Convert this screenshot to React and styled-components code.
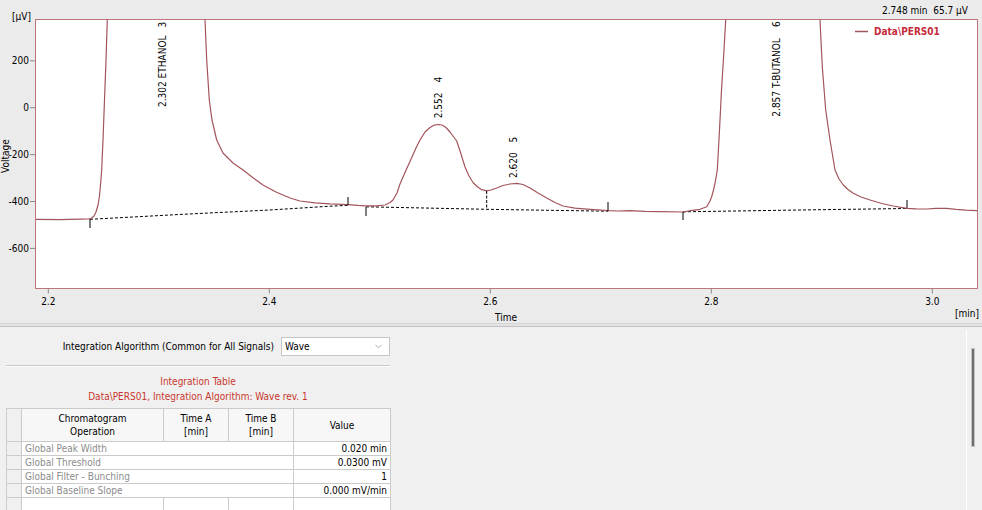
import React from "react";
import styled, { createGlobalStyle } from "styled-components";
import { ChevronDown } from "lucide-react";

const UI_FONT = `"DejaVu Sans Condensed", "DejaVu Sans", sans-serif`;

const GlobalStyle = createGlobalStyle`
  html, body {
    margin: 0;
    padding: 0;
    background: #f0f0f0;
  }
  body {
    font-family: ${UI_FONT};
    font-size: 10px;
    color: #000;
  }
`;

const Window = styled.div`
  width: 982px;
  height: 510px;
  display: flex;
  flex-direction: column;
  overflow: hidden;
`;

const ChartPane = styled.div`
  flex: none;
  height: 323px;
  background: #ebebeb;
`;

const Splitter = styled.div`
  flex: none;
  height: 2px;
  background: #e2e2e2;
  border-top: 1px solid #d6d6d6;
  border-bottom: 1px solid #c4c4c4;
`;

const Plot = styled.svg`
  display: block;
  font-family: ${UI_FONT};
  font-size: 10px;
`;

const LowerPane = styled.div`
  flex: 1;
  min-height: 0;
  display: flex;
  background: #f0f0f0;
`;

const Settings = styled.div`
  width: 384px;
  padding: 10px 0 0 6px;
  display: flex;
  flex-direction: column;
`;

const AlgoRow = styled.div`
  display: flex;
  justify-content: flex-end;
  align-items: center;
  gap: 7px;
  height: 19px;
`;

const Select = styled.div`
  width: 109px;
  height: 19px;
  box-sizing: border-box;
  display: flex;
  align-items: center;
  justify-content: space-between;
  padding: 0 5px 0 3px;
  background: #fff;
  border: 1px solid #c6c6c6;
  color: #000;
`;

const Divider = styled.div`
  margin-top: 9px;
  height: 0;
  border-top: 1px solid #c9c9c9;
  border-bottom: 1px solid #fff;
`;

const Caption = styled.div`
  margin-top: 7px;
  text-align: center;
  line-height: 15px;
  color: #c8372d;
`;

const Grid = styled.table`
  margin-top: 4px;
  width: 385px;
  border-collapse: collapse;
  table-layout: fixed;
  background: #fff;
  font-size: 10px;
`;

const HeadCell = styled.th`
  height: 32px;
  padding: 0 3px;
  font-weight: normal;
  line-height: 13px;
  text-align: center;
  vertical-align: middle;
  background: ${(p) => (p.$stub ? "#f0f0f0" : "#f7f7f7")};
  border: 1px solid #cbcbcb;
`;

const Cell = styled.td`
  height: 13px;
  padding: 0 3px;
  line-height: 12px;
  white-space: nowrap;
  overflow: hidden;
  text-align: ${(p) => p.$align || "left"};
  color: ${(p) => (p.$muted ? "#8c8c8c" : "#000")};
  background: ${(p) => (p.$stub ? "#f0f0f0" : "#fff")};
  border: 1px solid #cbcbcb;
`;

const ScrollTrack = styled.div`
  width: 16px;
  margin: 3px 0 0 auto;
  box-sizing: border-box;
  border-left: 1px solid #fff;
  padding: 19px 0 0 5px;
`;

const ScrollThumb = styled.div`
  width: 2px;
  height: 97px;
  background: #6f6f6f;
  box-shadow: 0 0 0 1px #c2c2c2;
`;

// plot frame and axis mapping, in chart pixels
const FRAME = { left: 35.5, top: 19.5, right: 977.5, bottom: 288.5 };
const xAt = (t) => 48.3 + (t - 2.2) * 1105;
const yAt = (uv) => 107.7 - uv * 0.2345;

const Y_TICKS = [200, 0, -200, -400, -600];
const X_TICKS = [2.2, 2.4, 2.6, 2.8, 3.0];

const TRACE_COLOR = "#a3555b";
const FRAME_COLOR = "#bf7579";

// detector trace, sampled in chart pixels (the two big peaks run off the top)
const TRACE = [
  [36, 219.3], [60, 219.6], [80, 219.2], [88, 219], [91, 218.5], [94, 216],
  [96, 212], [98, 205], [99.5, 196], [100.5, 185], [101.7, 170], [103, 140],
  [104.5, 100], [106, 60], [107.3, 20], [107.6, 10],
  [204.6, 10], [205, 20], [206.7, 60], [209.3, 100], [212, 120], [216.7, 140],
  [223, 153], [233, 163], [243, 170], [252, 177], [263, 185], [276, 192],
  [290, 198], [300, 201], [315, 202.8], [330, 203.8], [348, 204.6], [358, 205.4],
  [366, 205.8], [376, 205.8], [385, 205], [390, 202.5], [393, 200], [397, 193],
  [400, 184], [403, 177], [407, 168], [412, 157], [416, 148], [420, 140],
  [425, 132], [430, 127.5], [434, 125.2], [438.3, 124.5], [442, 125],
  [446, 127.5], [450, 132], [453, 136], [456.7, 141], [461, 154], [465, 167],
  [469, 176], [473, 182.5], [477, 186.5], [481, 189.3], [486.7, 190.8],
  [491, 190], [496.7, 188], [503, 185.5], [510, 184], [516.7, 183.3],
  [523, 184.5], [530, 188], [538, 193], [546.7, 198], [555, 202.5],
  [563, 206], [575, 208.2], [590, 209.3], [608, 210.7], [618, 211], [630, 210.6],
  [645, 211.4], [660, 211.7], [683, 212], [692, 210.3], [700, 209.3],
  [706.7, 206.7], [709.5, 202], [711.7, 196.7], [713.5, 190], [715, 183.3],
  [717.3, 170], [719.5, 130], [721.5, 90], [723.7, 55], [725.7, 20], [726, 10],
  [819.5, 10], [820, 20], [822.3, 66.7], [825.7, 110], [830, 140], [835, 170],
  [839, 179], [843.3, 185], [848, 189.5], [853.3, 193.3], [861, 197], [870, 200],
  [882, 203.5], [893.3, 206], [906.7, 208.3], [916, 208.8], [926.7, 209],
  [936, 208.4], [946.7, 208.3], [956, 209.4], [966, 210.2], [977, 210.7],
];

// integration baselines, dashed
const BASELINES = [
  [[90, 219.3], [183, 214.3], [270, 210], [330, 206.2], [348, 205.4]],
  [[366, 206.8], [487, 209.3], [608, 211.2]],
  [[683, 211.8], [800, 210], [907, 208.5]],
];

// peak start / end markers
const MARKS = [
  { x: 90, from: 219, to: 228 },
  { x: 348, from: 205, to: 197 },
  { x: 366, from: 207, to: 216 },
  { x: 608, from: 211, to: 202 },
  { x: 683, from: 212, to: 220 },
  { x: 907, from: 208, to: 200 },
];

const PEAKS = [
  { x: 165.5, y: 107, label: "2.302 ETHANOL", id: 3, idY: 27.5 },
  { x: 442, y: 118.3, label: "2.552", id: 4, idY: 82.5 },
  { x: 516.5, y: 178, label: "2.620", id: 5, idY: 142.5 },
  { x: 780, y: 116.7, label: "2.857 T-BUTANOL", id: 6, idY: 27 },
];

const toPoints = (pts) => pts.map((p) => p.join(",")).join(" ");

function Chromatogram() {
  const width = FRAME.right - FRAME.left;
  const height = FRAME.bottom - FRAME.top;

  return (
    <Plot width="982" height="323" viewBox="0 0 982 323">
      <defs>
        <clipPath id="plot-area">
          <rect x={FRAME.left} y={FRAME.top} width={width} height={height} />
        </clipPath>
      </defs>

      <rect
        x={FRAME.left}
        y={FRAME.top}
        width={width}
        height={height}
        fill="#fff"
        stroke={FRAME_COLOR}
        strokeWidth="1"
      />

      {Y_TICKS.map((v) => (
        <g key={v}>
          <line x1="30" x2={FRAME.left} y1={yAt(v)} y2={yAt(v)} stroke="#8a8a8a" />
          <text x="29" y={yAt(v) + 3.5} textAnchor="end">
            {v}
          </text>
        </g>
      ))}

      {X_TICKS.map((t) => (
        <g key={t}>
          <line x1={xAt(t)} x2={xAt(t)} y1={FRAME.bottom} y2={FRAME.bottom + 5} stroke="#8a8a8a" />
          <text x={xAt(t)} y="305" textAnchor="middle">
            {t.toFixed(1)}
          </text>
        </g>
      ))}

      <text x="12" y="20">[µV]</text>
      <text transform="translate(9,173) rotate(-90)">Voltage</text>
      <text x="506" y="321" textAnchor="middle">Time</text>
      <text x="955" y="317">[min]</text>

      <text x="968" y="14" textAnchor="end" style={{ whiteSpace: "pre" }}>
        2.748 min  65.7 µV
      </text>

      <g clipPath="url(#plot-area)">
        {BASELINES.map((seg, i) => (
          <polyline
            key={i}
            points={toPoints(seg)}
            fill="none"
            stroke="#000"
            strokeWidth="1"
            strokeDasharray="3 2"
          />
        ))}

        <polyline
          points={toPoints(TRACE)}
          fill="none"
          stroke={TRACE_COLOR}
          strokeWidth="1.2"
          strokeLinejoin="round"
        />

        <line
          x1="486.7"
          x2="486.7"
          y1="191"
          y2="209.3"
          stroke="#000"
          strokeDasharray="3 1.5"
        />

        {MARKS.map((m) => (
          <line key={m.x} x1={m.x} x2={m.x} y1={m.from} y2={m.to} stroke="#000" />
        ))}

        {PEAKS.map((p) => (
          <g key={p.id}>
            <text transform={`translate(${p.x},${p.y}) rotate(-90)`}>{p.label}</text>
            <text transform={`translate(${p.x},${p.idY}) rotate(-90)`}>{p.id}</text>
          </g>
        ))}
      </g>

      <line x1="855" x2="868" y1="31.5" y2="31.5" stroke={TRACE_COLOR} strokeWidth="1.5" />
      <text x="874" y="35" fill="#c62b3b" fontWeight="bold">
        Data\PERS01
      </text>
    </Plot>
  );
}

const OPERATIONS = [
  { name: "Global Peak Width", value: "0.020 min" },
  { name: "Global Threshold", value: "0.0300 mV" },
  { name: "Global Filter - Bunching", value: "1" },
  { name: "Global Baseline Slope", value: "0.000 mV/min" },
];

function IntegrationTable() {
  return (
    <Grid>
      <colgroup>
        <col style={{ width: 15 }} />
        <col style={{ width: 142 }} />
        <col style={{ width: 65 }} />
        <col style={{ width: 65 }} />
        <col style={{ width: 97 }} />
      </colgroup>
      <thead>
        <tr>
          <HeadCell $stub />
          <HeadCell>
            Chromatogram
            <br />
            Operation
          </HeadCell>
          <HeadCell>
            Time A
            <br />
            [min]
          </HeadCell>
          <HeadCell>
            Time B
            <br />
            [min]
          </HeadCell>
          <HeadCell>Value</HeadCell>
        </tr>
      </thead>
      <tbody>
        {OPERATIONS.map((op) => (
          <tr key={op.name}>
            <Cell $stub />
            <Cell colSpan={3} $muted>
              {op.name}
            </Cell>
            <Cell $align="right">{op.value}</Cell>
          </tr>
        ))}
        <tr>
          <Cell $stub />
          <Cell />
          <Cell />
          <Cell />
          <Cell />
        </tr>
      </tbody>
    </Grid>
  );
}

export default function App() {
  return (
    <Window>
      <GlobalStyle />
      <ChartPane>
        <Chromatogram />
      </ChartPane>
      <Splitter />
      <LowerPane>
        <Settings>
          <AlgoRow>
            <span>Integration Algorithm (Common for All Signals)</span>
            <Select>
              <span>Wave</span>
              <ChevronDown size={11} strokeWidth={1.2} color="#6a6a6a" />
            </Select>
          </AlgoRow>
          <Divider />
          <Caption>
            Integration Table
            <br />
            Data\PERS01, Integration Algorithm: Wave rev. 1
          </Caption>
          <IntegrationTable />
        </Settings>
        <ScrollTrack>
          <ScrollThumb />
        </ScrollTrack>
      </LowerPane>
    </Window>
  );
}
